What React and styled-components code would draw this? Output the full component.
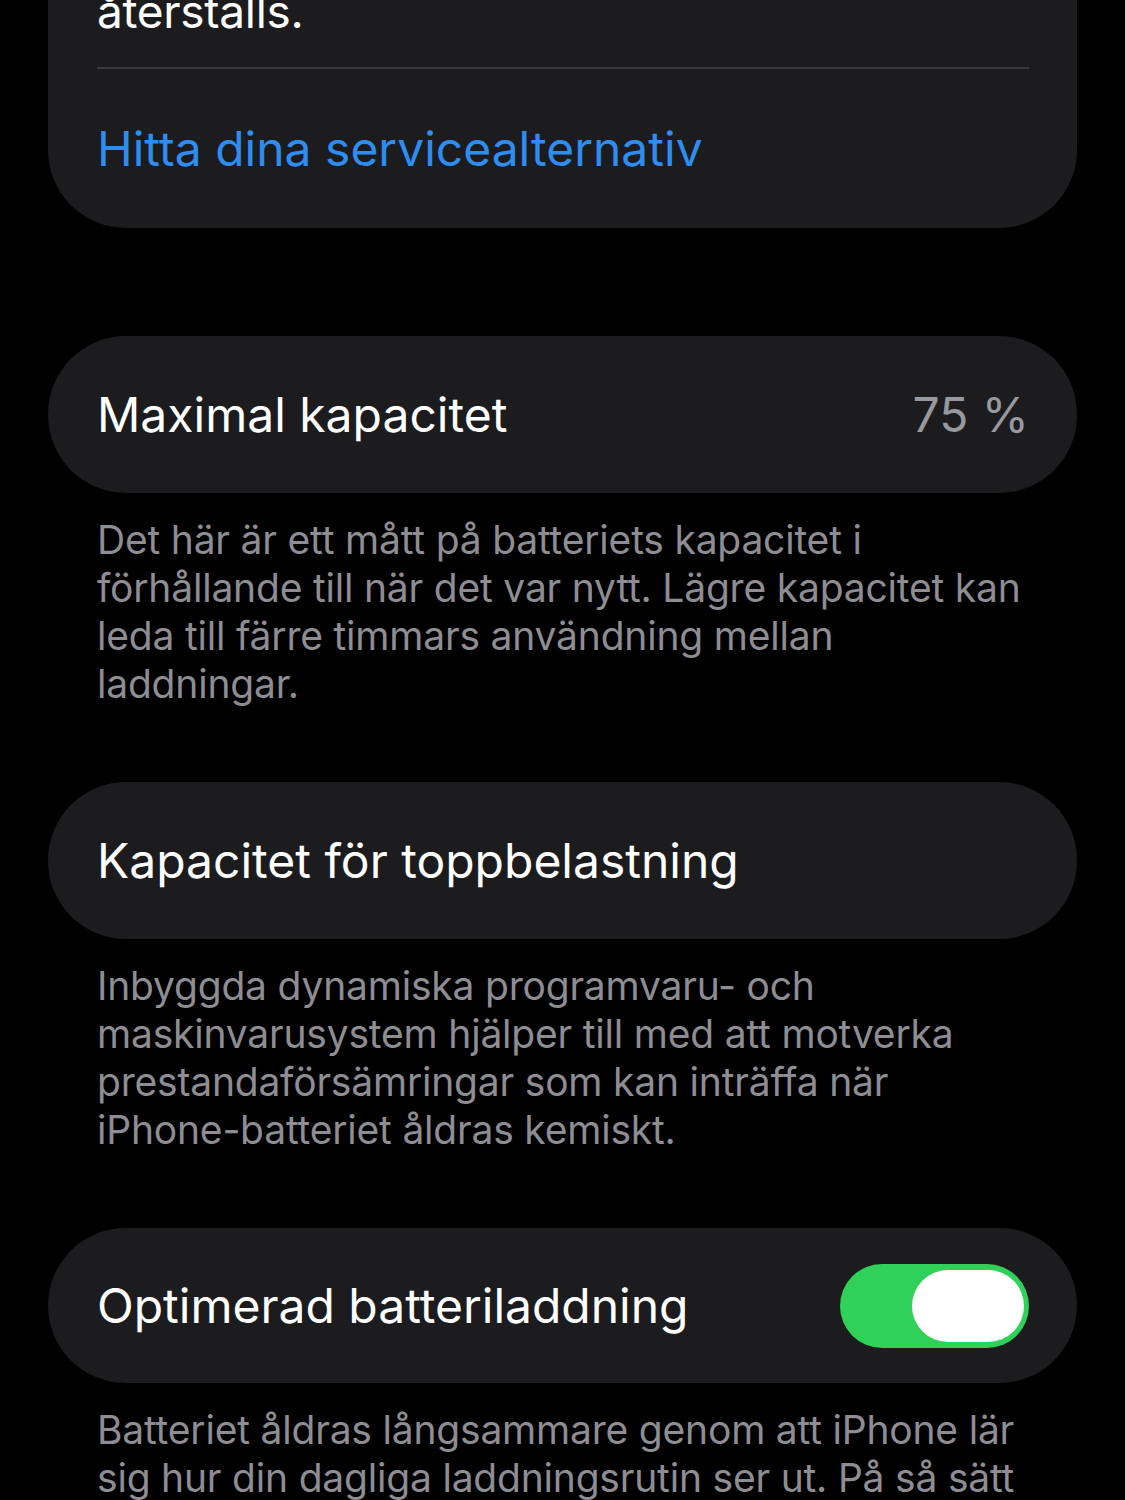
import React from "react";
import styled, { createGlobalStyle } from "styled-components";

const Global = createGlobalStyle`
  html, body { margin: 0; padding: 0; background: #000; }
  body { font-family: Inter, "Noto Sans", "Liberation Sans", sans-serif; -webkit-font-smoothing: antialiased; }
`;

const Page = styled.div`
  width: 1125px;
  height: 1500px;
  overflow: hidden;
  background: #000;
  box-sizing: border-box;
  padding: 0 48px;
`;

const Scroll = styled.div`
  margin-top: -133px;
  display: flex;
  flex-direction: column;
`;

const Card = styled.div`
  background: #1c1c1e;
  border-radius: 78px;
  padding: 0 48px 0 49px;
  display: flex;
  flex-direction: column;
`;

const CardText = styled.p`
  margin: 0;
  padding: 60px 0 28px;
  color: #fff;
  font-size: 46px;
  line-height: 56px;
  letter-spacing: -0.3px;
`;

const Separator = styled.div`
  height: 2px;
  background: #38383a;
`;

const Row = styled.div`
  height: ${(p) => p.$h || 157}px;
  display: flex;
  align-items: center;
  justify-content: space-between;
`;

const Title = styled.span`
  color: ${(p) => (p.$link ? "#2f8cf0" : "#fff")};
  font-size: 48px;
`;

const Value = styled.span`
  color: #98989f;
  font-size: 48px;
`;

const Footer = styled.p`
  margin: 23px 0 74px;
  padding: 0 0 0 49px;
  color: #8d8d93;
  font-size: 39px;
  line-height: 48px;
  letter-spacing: -0.2px;
  max-width: 940px;
`;

const NoWrap = styled.span`
  white-space: nowrap;
`;

const Gap = styled.div`
  height: ${(p) => p.$h}px;
`;

const Switch = styled.div`
  width: 189px;
  height: 84px;
  border-radius: 42px;
  background: #30d158;
  display: flex;
  align-items: center;
  justify-content: flex-end;
  padding: 0 5px;
  box-sizing: border-box;
`;

const Knob = styled.div`
  width: 112px;
  height: 72px;
  border-radius: 36px;
  background: #fff;
`;

export default function App() {
  return (
    <Page>
      <Global />
      <Scroll>
        <Card>
          <CardText>
            Den maximala prestandan har
            <br />
            återställs.
          </CardText>
          <Separator />
          <Row $h={159}>
            <Title $link>Hitta dina servicealternativ</Title>
          </Row>
        </Card>
        <Gap $h={108} />
        <Card>
          <Row>
            <Title>Maximal kapacitet</Title>
            <Value>75 %</Value>
          </Row>
        </Card>
        <Footer>
          Det här är ett mått på batteriets kapacitet i förhållande till när det
          var nytt. Lägre kapacitet kan leda till färre timmars användning
          mellan laddningar.
        </Footer>
        <Card>
          <Row>
            <Title>Kapacitet för toppbelastning</Title>
          </Row>
        </Card>
        <Footer>
          Inbyggda dynamiska programvaru- och maskinvarusystem hjälper till med
          att motverka prestandaförsämringar som kan inträffa när{" "}
          <NoWrap>iPhone-batteriet</NoWrap> åldras kemiskt.
        </Footer>
        <Card>
          <Row $h={155}>
            <Title>Optimerad batteriladdning</Title>
            <Switch>
              <Knob />
            </Switch>
          </Row>
        </Card>
        <Footer>
          Batteriet åldras långsammare genom att iPhone lär sig hur din dagliga
          laddningsrutin ser ut. På så sätt kan iPhone vänta med att ladda
          batteriet helt tills du behöver använda den.
        </Footer>
      </Scroll>
    </Page>
  );
}
